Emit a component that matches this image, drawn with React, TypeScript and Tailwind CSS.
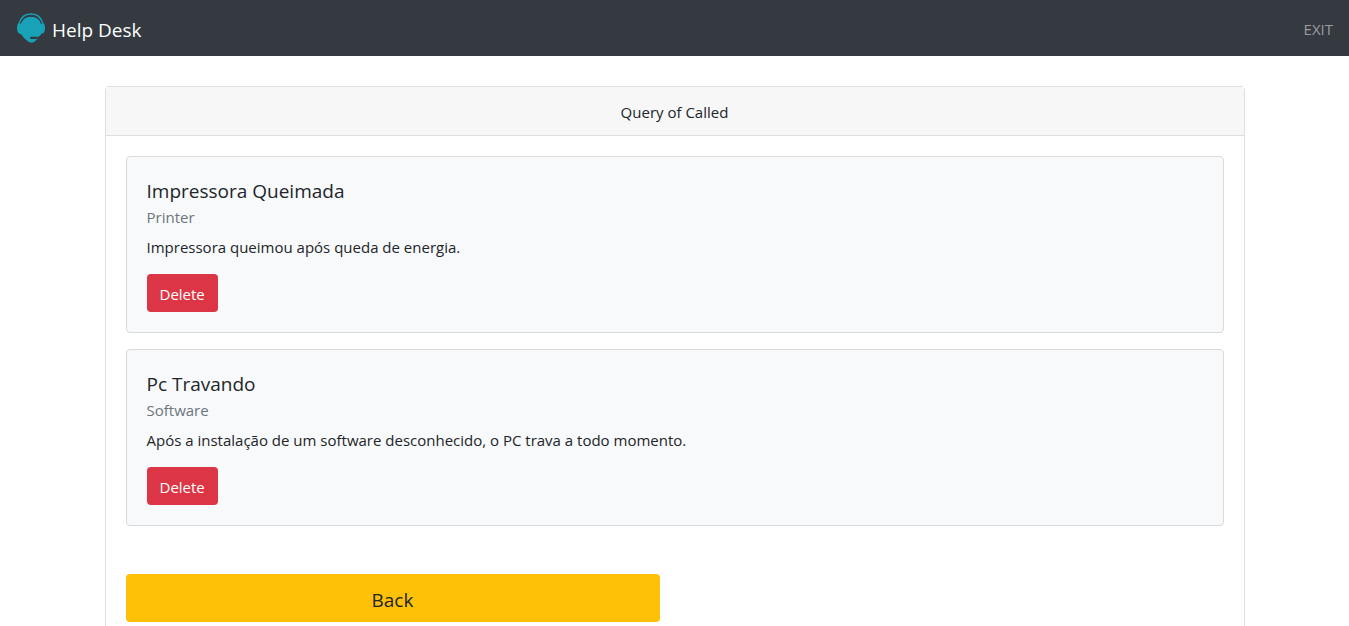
import React from "react";

type Ticket = { title: string; category: string; description: string };

const tickets: Ticket[] = [
  {
    title: "Impressora Queimada",
    category: "Printer",
    description: "Impressora queimou após queda de energia.",
  },
  {
    title: "Pc Travando",
    category: "Software",
    description:
      "Após a instalação de um software desconhecido, o PC trava a todo momento.",
  },
];

function HeadsetLogo() {
  return (
    <svg viewBox="0 0 90 90" className="size-[30px]" aria-hidden="true">
      <path d="M10 32C14 14 27 3 45 3S76 14 80 32" fill="none" stroke="#17a2b8" strokeWidth="5" />
      <path
        d="M14 34C18 19 29 11 45 11S72 19 76 34L82 29Q87 33 87 45T82 61L76 63C72 71 67 76 61 81Q54 89 48 89Q38 89 31 81Q22 74 17 65L8 61Q3 56 3 45T8 29Z"
        fill="#17a2b8"
      />
      <path d="M14 30C19 17 31 9 45 9S71 17 76 30" fill="none" stroke="#343a40" strokeWidth="3" />
      <path d="M79 62Q75 73 62 74" fill="none" stroke="#343a40" strokeWidth="4" />
      <rect x="42" y="71" width="23" height="7" rx="3" fill="#343a40" />
    </svg>
  );
}

function TicketCard({ title, category, description }: Ticket) {
  return (
    <article className="rounded border border-[#d9dadb] bg-[#f8f9fa] p-5">
      <h5 className="text-[19px] leading-7">{title}</h5>
      <h6 className="mt-0.5 text-[15px] leading-5 text-[#6c757d]">{category}</h6>
      <p className="mt-2 leading-6">{description}</p>
      <button
        type="button"
        className="mt-[15px] h-[38px] rounded bg-[#dc3545] px-[13px] pt-0.5 text-white hover:bg-[#c82333]"
      >
        Delete
      </button>
    </article>
  );
}

export default function App() {
  return (
    <div className="bg-white font-['Open_Sans','Noto_Sans',sans-serif] text-[15px] leading-6 text-[#212529]">
      <nav className="flex h-14 items-center justify-between bg-[#343a40] px-4">
        <a href="#" className="flex items-center gap-1.5 text-[19px] text-white">
          <HeadsetLogo />
          <span className="pt-1">Help Desk</span>
        </a>
        <a href="#" className="pt-0.5 text-[#9a9da0] hover:text-white">
          EXIT
        </a>
      </nav>

      <main className="mx-auto max-w-[1140px] pt-[30px]">
        <section className="rounded border border-[#dfdfdf]">
          <header className="border-b border-[#dfdfdf] bg-[#f7f7f7] px-5 pt-[13px] pb-[11px] text-center">
            Query of Called
          </header>
          <div className="p-5">
            <div className="flex flex-col gap-4">
              {tickets.map((ticket) => (
                <TicketCard key={ticket.title} {...ticket} />
              ))}
            </div>
            <div className="mt-12 grid grid-cols-2 gap-[30px]">
              <button
                type="button"
                className="h-12 rounded bg-[#ffc107] pt-1 text-[19px] hover:bg-[#e0a800]"
              >
                Back
              </button>
            </div>
          </div>
        </section>
      </main>
    </div>
  );
}
